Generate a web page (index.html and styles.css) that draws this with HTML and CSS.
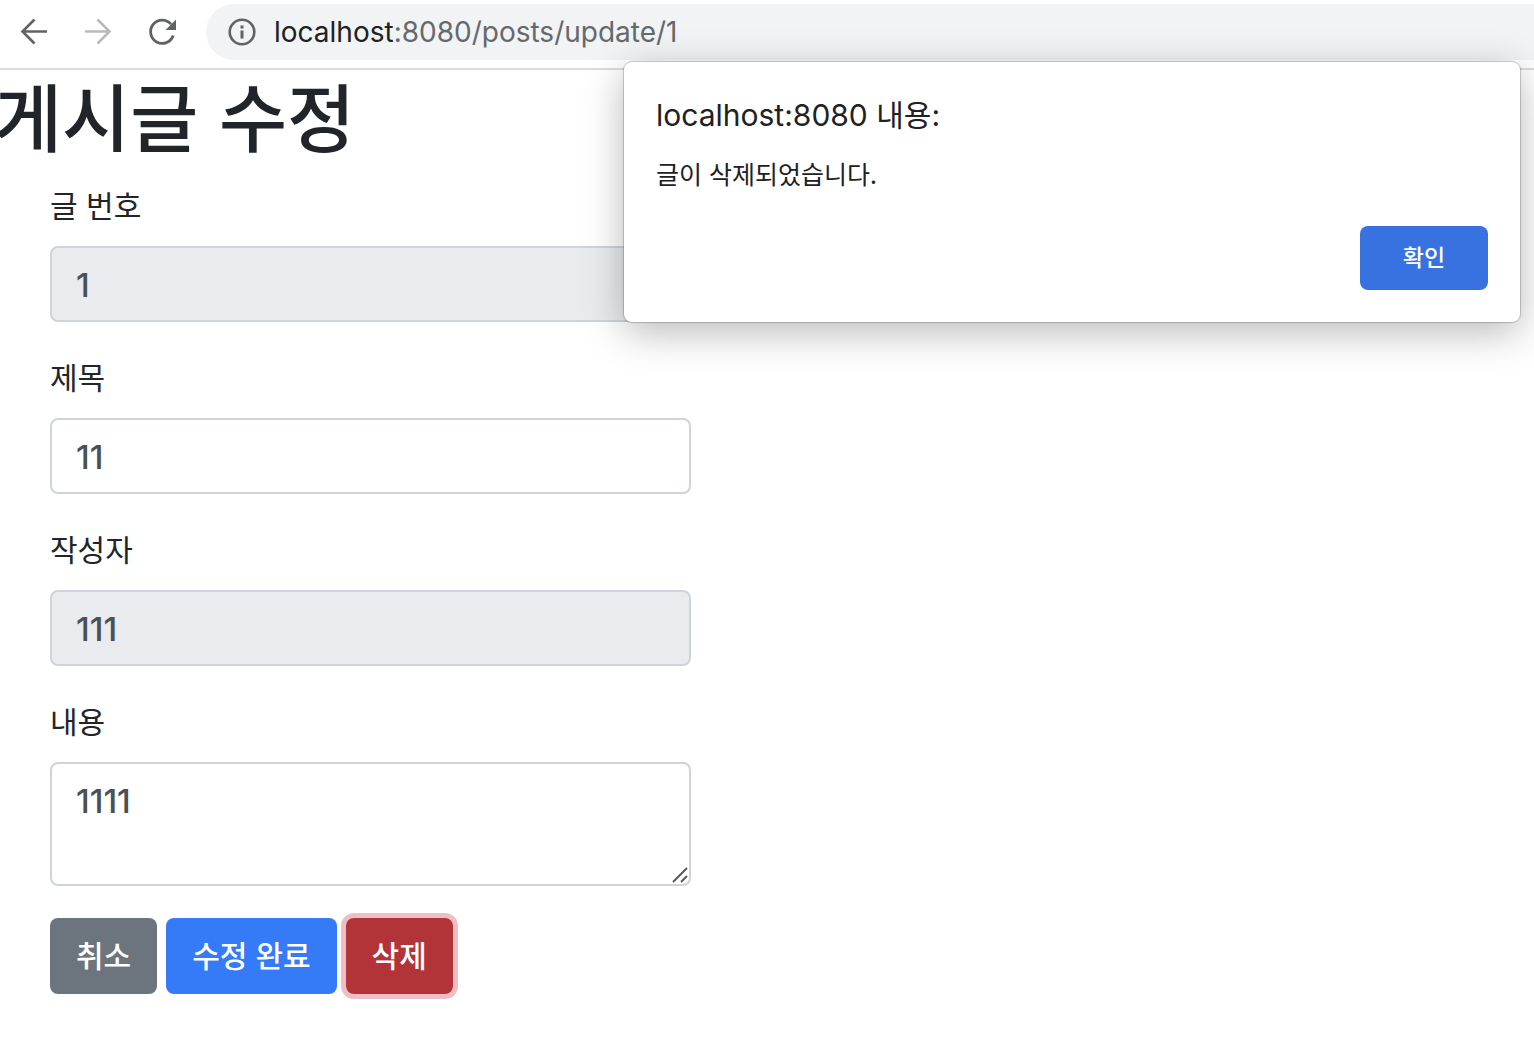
FILE: index.html
```html
<!DOCTYPE html>
<html lang="ko">
<head>
<meta charset="utf-8">
<meta name="viewport" content="width=device-width, initial-scale=1">
<title>게시글 수정</title>
<link rel="stylesheet" href="styles.css">
</head>
<body>
<header class="toolbar">
  <nav class="nav" aria-label="탐색">
    <button class="icon-btn" type="button" aria-label="뒤로">
      <svg width="32" height="32" viewBox="0 0 32 32" fill="none" stroke="#5f6368" stroke-width="2.6"><path d="M29 15.500H4.500M16.500 3.500l-12 12 12 12"/></svg>
    </button>
    <button class="icon-btn" type="button" aria-label="앞으로" disabled>
      <svg width="32" height="32" viewBox="0 0 32 32" fill="none" stroke="#bababa" stroke-width="2.6"><path d="M3 15.500h24.500M15.500 3.500l12 12-12 12"/></svg>
    </button>
    <button class="icon-btn" type="button" aria-label="새로고침">
      <svg width="32" height="32" viewBox="0 0 32 32" fill="none" stroke="#5f6368" stroke-width="2.8"><path d="M27.200 19.500A11.600 11.600 0 1 1 25 8.200"/><path d="M30 3.500V14H19.500Z" fill="#5f6368" stroke="none"/></svg>
    </button>
  </nav>
  <div class="address">
    <svg class="info" width="28" height="28" viewBox="0 0 28 28"><circle cx="14" cy="14" r="12.300" fill="none" stroke="#5f6368" stroke-width="2.600"/><path d="M12.500 12.500h3V20.500h-3zM12.500 7.500h3v3h-3z" fill="#5f6368"/></svg>
    <span class="url"><span class="host">localhost</span>:8080/posts/update/1</span>
  </div>
</header>

<main class="page">
  <h1 class="title">게시글 수정</h1>
  <form class="form">
    <div class="field">
      <label for="id">글 번호</label>
      <input class="control" type="text" id="id" value="1" readonly>
    </div>
    <div class="field">
      <label for="title">제목</label>
      <input class="control" type="text" id="title" value="11">
    </div>
    <div class="field">
      <label for="author">작성자</label>
      <input class="control" type="text" id="author" value="111" readonly>
    </div>
    <div class="field">
      <label for="content">내용</label>
      <div class="area">
        <textarea class="control" id="content">1111</textarea>
        <svg class="grip" width="16" height="16" viewBox="0 0 16 16" fill="none" stroke="#555" stroke-width="1.800"><path d="M1 15L15 1M9 15l6-6"/></svg>
      </div>
    </div>
    <div class="actions">
      <button class="btn secondary" type="button">취소</button>
      <button class="btn primary" type="button">수정 완료</button>
      <button class="btn danger" type="button">삭제</button>
    </div>
  </form>
</main>

<div class="alert" role="alertdialog" aria-labelledby="alert-title" aria-describedby="alert-text">
  <h2 class="alert-title" id="alert-title">localhost:8080 내용:</h2>
  <p class="alert-text" id="alert-text">글이 삭제되었습니다.</p>
  <button class="confirm" type="button">확인</button>
</div>
</body>
</html>
```

FILE: styles.css
```css
* { box-sizing: border-box; }

body {
  margin: 0;
  background: #fff;
  color: #212529;
  font-family: Inter, "Noto Sans CJK KR", sans-serif;
  font-size: 30px;
  line-height: 48px;
}

button, input, textarea { font: inherit; }

svg { display: block; }

.toolbar {
  display: flex;
  align-items: center;
  height: 70px;
  padding: 0 0 8px 18px;
  border-bottom: 2px solid #dadbdd;
}

.nav {
  display: flex;
  gap: 32px;
  margin-top: 4px;
}

.icon-btn {
  padding: 0;
  border: 0;
  background: none;
}

.address {
  display: flex;
  flex: 1;
  align-items: center;
  gap: 18px;
  height: 56px;
  margin: 4px 0 0 28px;
  padding-left: 22px;
  border-radius: 28px 0 0 28px;
  background: #f1f3f4;
}

.url {
  color: #66696c;
  font-size: 28px;
}

.host { color: #202124; }

.page { padding-bottom: 60px; }

.title {
  margin: 0 0 24px -6px;
  font-family: "Noto Sans CJK KR", sans-serif;
  font-size: 74px;
  font-weight: 500;
  line-height: 88px;
}

.form {
  max-width: 741px;
  padding: 0 50px;
}

.field { margin-bottom: 32px; }

.field label {
  display: block;
  margin-bottom: 16px;
}

.control {
  display: block;
  width: 100%;
  height: 76px;
  padding: 13px 24px 11px;
  border: 2px solid #ced4da;
  border-radius: 8px;
  outline: 0;
  background: #fff;
  color: #495057;
  font-size: 33px;
  font-weight: 500;
}

.control:read-only { background: #eaebef; }

.area { position: relative; }

.area .control {
  height: 124px;
  resize: vertical;
}

.area .control::-webkit-resizer { display: none; }

.grip {
  position: absolute;
  right: 3px;
  bottom: 3px;
  pointer-events: none;
}

.actions {
  display: flex;
  gap: 9px;
}

.btn {
  height: 76px;
  padding: 0 26px;
  border: 0;
  border-radius: 8px;
  color: #fff;
  font-weight: 500;
}

.secondary { background: #6c757d; }

.primary { background: #357af6; }

.danger {
  background: #b23338;
  box-shadow: 0 0 0 5px #edbfc4;
}

.alert {
  position: absolute;
  top: 62px;
  right: 14px;
  display: flex;
  flex-direction: column;
  width: 896px;
  max-width: calc(100% - 28px);
  padding: 32px;
  border-radius: 8px;
  background: #fff;
  box-shadow: 0 0 1px 1px rgba(0, 0, 0, 0.2), 0 10px 40px rgba(0, 0, 0, 0.28);
  color: #202124;
}

.alert-title {
  margin: 0 0 16px;
  font-size: 30px;
  font-weight: 400;
  line-height: 42px;
}

.alert-text {
  margin: 0 0 32px;
  font-family: "Noto Sans CJK KR", sans-serif;
  font-size: 25px;
  line-height: 42px;
}

.confirm {
  align-self: flex-end;
  width: 128px;
  height: 64px;
  padding: 0;
  border: 0;
  border-radius: 8px;
  background: #3871e0;
  color: #fff;
  font-size: 23px;
  font-weight: 500;
}
```
